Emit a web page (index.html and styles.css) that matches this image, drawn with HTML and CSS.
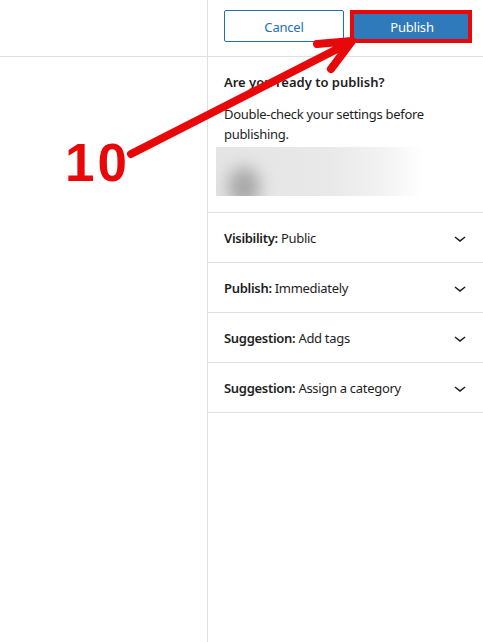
FILE: index.html
```html
<!DOCTYPE html>
<html lang="en">
<head>
    <meta charset="UTF-8">
    <meta name="viewport" content="width=device-width, initial-scale=1.0">
    <title>Publish Panel - Step 10</title>
    <link rel="stylesheet" href="styles.css">
</head>
<body>
    <div class="editor">
        <div class="canvas-col">
            <div class="col-header"></div>
        </div>

        <div class="panel">
            <div class="col-header panel-header">
                <button class="btn btn-secondary">Cancel</button>
                <button class="btn btn-primary">Publish</button>
            </div>

            <div class="prepublish">
                <p class="prepublish-title">Are you ready to publish?</p>
                <p class="prepublish-text">Double-check your settings before publishing.</p>
                <div class="site-card">
                    <div class="blur-blob"></div>
                </div>
            </div>

            <div class="panel-row">
                <span><strong>Visibility:</strong> Public</span>
                <svg class="chevron" viewBox="0 0 24 24" width="24" height="24"><path d="M17.5 11.6L12 16l-5.5-4.4.9-1.2L12 14l4.6-3.6 1 1.2z"/></svg>
            </div>
            <div class="panel-row">
                <span><strong>Publish:</strong> Immediately</span>
                <svg class="chevron" viewBox="0 0 24 24" width="24" height="24"><path d="M17.5 11.6L12 16l-5.5-4.4.9-1.2L12 14l4.6-3.6 1 1.2z"/></svg>
            </div>
            <div class="panel-row">
                <span><strong>Suggestion:</strong> Add tags</span>
                <svg class="chevron" viewBox="0 0 24 24" width="24" height="24"><path d="M17.5 11.6L12 16l-5.5-4.4.9-1.2L12 14l4.6-3.6 1 1.2z"/></svg>
            </div>
            <div class="panel-row">
                <span><strong>Suggestion:</strong> Assign a category</span>
                <svg class="chevron" viewBox="0 0 24 24" width="24" height="24"><path d="M17.5 11.6L12 16l-5.5-4.4.9-1.2L12 14l4.6-3.6 1 1.2z"/></svg>
            </div>
        </div>
    </div>

    <!-- Tutorial annotation -->
    <div class="highlight-box"></div>
    <div class="step-number">10</div>
    <svg class="step-arrow" width="483" height="642" viewBox="0 0 483 642">
        <path d="M131 154 L351 42 M317 44 L352 41 L331 69" />
    </svg>
</body>
</html>
```

FILE: styles.css
```css
* {
    box-sizing: border-box;
}
body {
    margin: 0;
    font-family: 'Noto Sans', 'Open Sans', Arial, sans-serif;
    font-size: 13px;
    color: #1e1e1e;
    background: white;
}
.editor {
    display: flex;
    height: 642px;
}
.canvas-col {
    width: 207px;
    flex-shrink: 0;
}
.col-header {
    height: 57px;
    border-bottom: 1px solid #e0e0e0;
}
.panel {
    flex: 1;
    border-left: 1px solid #e0e0e0;
}
.panel-header {
    display: flex;
    align-items: flex-start;
    gap: 8px;
    padding: 10px 0 0 16px;
}
.btn {
    width: 120px;
    height: 32px;
    padding-top: 2px;
    border-radius: 2px;
    font-family: inherit;
    font-size: 13px;
    letter-spacing: -0.2px;
    cursor: pointer;
}
.btn-secondary {
    background: white;
    border: 1px solid #2271b1;
    color: #2271b1;
}
.btn-primary {
    background: #2e7abb;
    border: none;
    color: white;
}
.prepublish {
    padding: 15px 16px 16px;
    border-bottom: 1px solid #e0e0e0;
}
.prepublish p {
    margin: 0;
    line-height: 20px;
}
.prepublish-title {
    font-weight: 600;
}
.prepublish-text {
    margin-top: 12px !important;
    letter-spacing: -0.3px;
}
.site-card {
    position: relative;
    overflow: hidden;
    width: 207px;
    height: 49px;
    margin: 3px 0 0 -8px;
    background: linear-gradient(90deg, #e4e4e4 0%, #e9e9e9 55%, #f2f2f2 80%, #ffffff 100%);
}
.blur-blob {
    position: absolute;
    left: 12px;
    top: 20px;
    width: 32px;
    height: 40px;
    border-radius: 50%;
    background: #a8a8a8;
    filter: blur(8px);
}
.panel-row {
    display: flex;
    align-items: center;
    justify-content: space-between;
    height: 50px;
    padding: 0 11px 0 16px;
    border-bottom: 1px solid #e0e0e0;
    letter-spacing: -0.3px;
}
.panel-row strong {
    font-weight: 600;
}
.chevron {
    fill: #1e1e1e;
}
.highlight-box {
    position: absolute;
    left: 350px;
    top: 10px;
    width: 122px;
    height: 33px;
    border: 4px solid #e8080a;
}
.step-number {
    position: absolute;
    left: 65px;
    top: 135px;
    font-family: 'Liberation Sans', Arial, sans-serif;
    font-weight: bold;
    font-size: 53px;
    line-height: 56px;
    letter-spacing: 3px;
    color: #e8080a;
}
.step-arrow {
    position: absolute;
    left: 0;
    top: 0;
    pointer-events: none;
}
.step-arrow path {
    fill: none;
    stroke: #e8080a;
    stroke-width: 8;
    stroke-linecap: round;
    stroke-linejoin: round;
}
```
